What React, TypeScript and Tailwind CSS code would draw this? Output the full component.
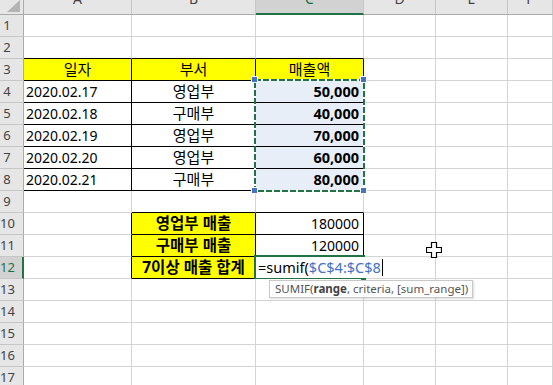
import React from "react";

type Cell = {
  text?: string;
  align?: "left" | "center" | "right";
  bold?: boolean;
  yellow?: boolean;
  sel?: boolean;
  ko?: boolean;
  bR?: boolean;
  bB?: boolean;
};

const COLS = ["A", "B", "C", "D", "E", "F"];

function buildCells(): Record<string, Cell> {
  const c: Record<string, Cell> = {};
  // row 2 bottom borders for table top
  c["A2"] = { bB: true };
  c["B2"] = { bB: true };
  c["C2"] = { bB: true };
  c["A3"] = { text: "일자", align: "center", yellow: true, ko: true, bR: true, bB: true };
  c["B3"] = { text: "부서", align: "center", yellow: true, ko: true, bR: true, bB: true };
  c["C3"] = { text: "매출액", align: "center", yellow: true, ko: true, bR: true, bB: true };
  const data: [string, string, string][] = [
    ["2020.02.17", "영업부", "50,000"],
    ["2020.02.18", "구매부", "40,000"],
    ["2020.02.19", "영업부", "70,000"],
    ["2020.02.20", "영업부", "60,000"],
    ["2020.02.21", "구매부", "80,000"],
  ];
  data.forEach((d, i) => {
    const r = i + 4;
    c["A" + r] = { text: d[0], align: "left", bR: true, bB: true };
    c["B" + r] = { text: d[1], align: "center", ko: true, bR: true, bB: true };
    c["C" + r] = { text: d[2], align: "right", bold: true, sel: true, bR: true, bB: true };
  });
  c["B9"] = { bB: true };
  c["C9"] = { bB: true };
  c["A10"] = { bR: true };
  c["A11"] = { bR: true };
  c["A12"] = { bR: true };
  c["B10"] = { text: "영업부 매출", align: "center", bold: true, yellow: true, ko: true, bR: true, bB: true };
  c["B11"] = { text: "구매부 매출", align: "center", bold: true, yellow: true, ko: true, bR: true, bB: true };
  c["B12"] = { text: "7이상 매출 합계", align: "center", bold: true, yellow: true, ko: true, bR: true, bB: true };
  c["C10"] = { text: "180000", align: "right", bR: true, bB: true };
  c["C11"] = { text: "120000", align: "right", bR: true, bB: true };
  return c;
}

export default function App() {
  const cells = buildCells();
  const rows = Array.from({ length: 17 }, (_, i) => i + 1);

  return (
    <div
      className="relative w-[553px] h-[385px] overflow-hidden bg-white text-black"
      style={{ fontFamily: '"Noto Sans", "Noto Sans CJK KR", sans-serif' }}
    >
      <div className="grid grid-cols-[24px_108px_124px_108px_72px_72px_1fr] grid-rows-[15px_repeat(17,22px)]">
        {/* corner */}
        <div className="bg-[#e6e6e6] border-r border-b border-r-[#ababab] border-b-[#ababab] overflow-hidden">
          <svg width="24" height="15" viewBox="0 0 24 15">
            <polygon points="7,12 20,12 20,0" fill="#b4b4b4" />
          </svg>
        </div>
        {COLS.map((col) => {
          const active = col === "C";
          return (
            <div
              key={col}
              className={
                "h-[15px] overflow-hidden border-r border-r-[#c6c6c6] " +
                (active
                  ? "bg-[#d2d2d2] border-b-2 border-b-[#217346] text-[#217346]"
                  : "bg-[#e6e6e6] border-b border-b-[#ababab] text-[#444]")
              }
            >
              <div className="-mt-[8px] h-[14px] leading-[14px] text-center text-[14px]">{col}</div>
            </div>
          );
        })}
        {rows.map((r) => (
          <React.Fragment key={r}>
            <div
              className={
                "flex items-center text-[13px] border-b border-b-[#c6c6c6] " +
                (r === 12
                  ? "bg-[#d2d2d2] text-[#217346] border-r-2 border-r-[#217346]"
                  : "bg-[#e6e6e6] text-[#444] border-r border-r-[#ababab]")
              }
            >
              <span className="w-[14px] text-center leading-none">{r}</span>
            </div>
            {COLS.map((col) => {
              const cell = cells[col + r] || {};
              const bg = cell.yellow ? "bg-[#ffff00]" : cell.sel ? "bg-[#e8eef8]" : "bg-white";
              const br = cell.bR ? "border-r-black" : "border-r-[#d4d4d4]";
              const bb = cell.bB ? "border-b-black" : "border-b-[#d4d4d4]";
              const just =
                cell.align === "center"
                  ? "justify-center"
                  : cell.align === "right"
                  ? "justify-end pr-[4px]"
                  : "justify-start pl-[2px]";
              const size = cell.ko
                ? cell.bold
                  ? "text-[15.5px] font-bold"
                  : "text-[15px]"
                : cell.bold
                ? "text-[14.5px] font-bold"
                : "text-[14px]";
              return (
                <div
                  key={col + r}
                  className={`flex items-center whitespace-nowrap overflow-hidden border-r border-b ${bg} ${br} ${bb} ${just} ${size}`}
                >
                  {cell.text}
                </div>
              );
            })}
          </React.Fragment>
        ))}
      </div>

      {/* marching ants selection C4:C8 */}
      <svg className="absolute left-[250px] top-[75px]" width="120" height="122" viewBox="0 0 120 122">
        <rect x="5" y="5" width="109" height="111" fill="none" stroke="#ffffff" strokeWidth="2" />
        <rect x="5" y="5" width="109" height="111" fill="none" stroke="#217346" strokeWidth="2" strokeDasharray="6 2" />
      </svg>
      <div className="absolute left-[251px] top-[76px] w-[7px] h-[7px] bg-[#4472c4] border border-white" />
      <div className="absolute left-[360px] top-[76px] w-[7px] h-[7px] bg-[#4472c4] border border-white" />
      <div className="absolute left-[251px] top-[187px] w-[7px] h-[7px] bg-[#4472c4] border border-white" />
      <div className="absolute left-[360px] top-[187px] w-[7px] h-[7px] bg-[#4472c4] border border-white" />

      {/* active cell C12 in edit mode */}
      <div className="absolute left-[254px] top-[255px] w-[111px] h-[24px] border-2 border-r-0 border-[#217346]" />
      <div className="absolute left-[361px] top-[276px] w-[5px] h-[5px] bg-[#217346]" />
      <div className="absolute left-[256px] top-[257px] h-[21px] flex items-center bg-white pl-[2px] pr-[1px] text-[14.5px] whitespace-nowrap">
        <span>=sumif(</span>
        <span className="text-[#4472c4]">$C$4:$C$8</span>
        <span className="ml-[1px] w-px h-[17px] bg-black" />
      </div>

      {/* function tooltip */}
      <div className="absolute left-[269px] top-[280px] w-[204px] h-[18px] bg-white border border-[#c8c8c8] shadow-[1px_1px_2px_rgba(0,0,0,0.15)] flex items-center pl-[5px] text-[11.5px] text-[#555] whitespace-nowrap">
        SUMIF(<b className="font-bold text-[#444]">range</b>, criteria, [sum_range])
      </div>

      {/* cursor */}
      <svg className="absolute left-[426px] top-[242px]" width="16" height="16" viewBox="0 0 16 16">
        <polygon
          points="5.5,0.5 10.5,0.5 10.5,5.5 15.5,5.5 15.5,10.5 10.5,10.5 10.5,15.5 5.5,15.5 5.5,10.5 0.5,10.5 0.5,5.5 5.5,5.5"
          fill="#ffffff"
          stroke="#000000"
          strokeWidth="1.2"
        />
      </svg>
    </div>
  );
}
